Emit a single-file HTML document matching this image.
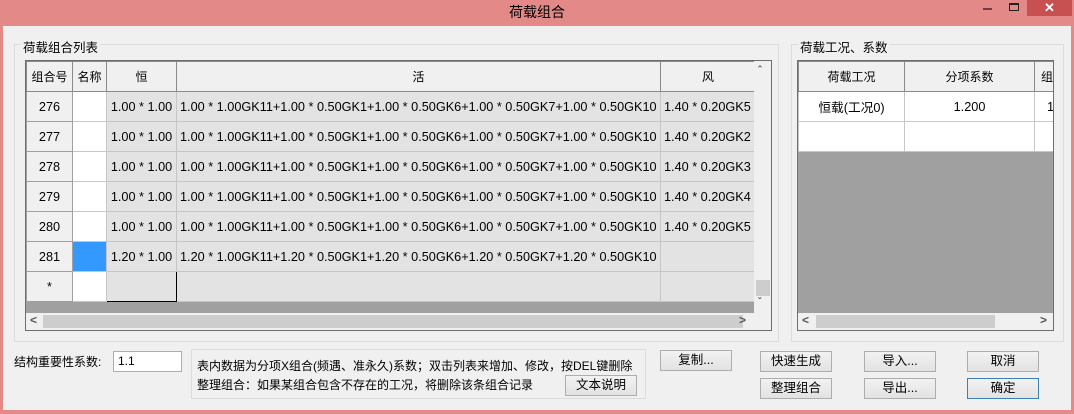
<!DOCTYPE html>
<html><head><meta charset="utf-8"><style>
*{box-sizing:border-box;margin:0;padding:0}
body{width:1074px;height:414px;background:#e38a88;font-family:"Liberation Sans","Noto Sans CJK SC",sans-serif;font-size:12px;color:#000;position:relative;overflow:hidden}
.a{position:absolute}
.title{left:0;top:2px;width:1074px;text-align:center;font-size:14px;color:#000}
.win{left:3px;top:26px;width:1068px;height:384px;background:#f0f0f0}
.grp{border:1px solid #dcdcdc}
.lbl{background:#f0f0f0;padding:0 2px;font-size:12px}
table{border-collapse:collapse;table-layout:fixed}
td{border:1px solid #c6c6c6;height:30px;text-align:center;white-space:nowrap;overflow:hidden;font-size:12.7px;padding:0 3px}
.hd td{background:#f0f0f0;border-color:#8a8a8a;height:30px;font-size:12px}
td.rh{background:#f0f0f0;border-color:#a0a0a0}
td.w{background:#fff}
td.g{background:#e3e3e3}
.btn{border:1px solid #adadad;background:linear-gradient(#f2f2f2,#e2e2e2);text-align:center;line-height:19px;font-size:12.5px;height:21px;width:72px}
.t{font-size:12.5px}
.s{font-size:12px}
</style></head><body>
<div class="a title">荷载组合</div>
<div class="a" style="left:1027px;top:0;width:45px;height:16px;background:#c75050;color:#fff;text-align:center;font-size:13px;line-height:16px;font-weight:bold">✕</div>
<div class="a" style="left:983px;top:8px;width:9px;height:2px;background:#6a4040"></div>
<div class="a" style="left:1009px;top:3px;width:10px;height:8px;border:1px solid #222;border-top-width:2px"></div>
<div class="a win"></div>

<div class="a grp" style="left:14px;top:44px;width:765px;height:298px"></div>
<div class="a lbl t" style="left:21px;top:37px">荷载组合列表</div>
<div class="a" style="left:25px;top:60px;width:747px;height:271px;background:#a0a0a0;border:1px solid #6e6e6e;overflow:hidden">
<table style="width:729px">
<colgroup><col style="width:46px"><col style="width:34px"><col style="width:70px"><col style="width:484px"><col style="width:95px"></colgroup>
<tr class="hd"><td>组合号</td><td>名称</td><td>恒</td><td>活</td><td>风</td></tr>
<tr><td class="rh">276</td><td class="w"></td><td class="g">1.00 * 1.00</td><td class="g" style="text-align:left">1.00 * 1.00GK11+1.00 * 0.50GK1+1.00 * 0.50GK6+1.00 * 0.50GK7+1.00 * 0.50GK10</td><td class="g" style="text-align:left">1.40 * 0.20GK5</td></tr>
<tr><td class="rh">277</td><td class="w"></td><td class="g">1.00 * 1.00</td><td class="g" style="text-align:left">1.00 * 1.00GK11+1.00 * 0.50GK1+1.00 * 0.50GK6+1.00 * 0.50GK7+1.00 * 0.50GK10</td><td class="g" style="text-align:left">1.40 * 0.20GK2</td></tr>
<tr><td class="rh">278</td><td class="w"></td><td class="g">1.00 * 1.00</td><td class="g" style="text-align:left">1.00 * 1.00GK11+1.00 * 0.50GK1+1.00 * 0.50GK6+1.00 * 0.50GK7+1.00 * 0.50GK10</td><td class="g" style="text-align:left">1.40 * 0.20GK3</td></tr>
<tr><td class="rh">279</td><td class="w"></td><td class="g">1.00 * 1.00</td><td class="g" style="text-align:left">1.00 * 1.00GK11+1.00 * 0.50GK1+1.00 * 0.50GK6+1.00 * 0.50GK7+1.00 * 0.50GK10</td><td class="g" style="text-align:left">1.40 * 0.20GK4</td></tr>
<tr><td class="rh">280</td><td class="w"></td><td class="g">1.00 * 1.00</td><td class="g" style="text-align:left">1.00 * 1.00GK11+1.00 * 0.50GK1+1.00 * 0.50GK6+1.00 * 0.50GK7+1.00 * 0.50GK10</td><td class="g" style="text-align:left">1.40 * 0.20GK5</td></tr>
<tr><td class="rh">281</td><td style="background:#3399ff"></td><td class="g">1.20 * 1.00</td><td class="g" style="text-align:left">1.20 * 1.00GK11+1.20 * 0.50GK1+1.20 * 0.50GK6+1.20 * 0.50GK7+1.20 * 0.50GK10</td><td class="g"></td></tr>
<tr><td class="rh">*</td><td class="w"></td><td class="g" style="border:1px solid #000"></td><td class="g"></td><td class="g"></td></tr>
</table>
<div class="a" style="left:728px;top:0;width:17px;height:252px;background:#f0f0f0"></div>
<div class="a" style="left:732px;top:4px;font-size:11px;color:#555;font-weight:bold">ˆ</div>
<div class="a" style="left:730px;top:219px;width:14px;height:16px;background:#cdcdcd"></div>
<div class="a" style="left:732px;top:236px;font-size:10px;color:#555;font-weight:bold">ˇ</div>
<div class="a" style="left:0;top:252px;width:745px;height:17px;background:#f0f0f0"></div>
<div class="a" style="left:17px;top:254px;width:700px;height:13px;background:#cdcdcd"></div>
<div class="a" style="left:4px;top:252px;font-size:12px;color:#555;font-weight:bold">&lt;</div>
<div class="a" style="left:713px;top:252px;font-size:12px;color:#555;font-weight:bold">&gt;</div>
</div>

<div class="a grp" style="left:791px;top:44px;width:273px;height:298px"></div>
<div class="a lbl t" style="left:798px;top:37px">荷载工况、系数</div>
<div class="a" style="left:797px;top:60px;width:257px;height:271px;background:#a0a0a0;border:1px solid #6e6e6e;overflow:hidden">
<table style="width:320px">
<colgroup><col style="width:106px"><col style="width:130px"><col style="width:84px"></colgroup>
<tr class="hd"><td>荷载工况</td><td>分项系数</td><td style="text-align:left;padding-left:6px">组合</td></tr>
<tr><td class="w">恒载(工况0)</td><td class="w">1.200</td><td class="w" style="text-align:left;padding-left:12px">1.</td></tr>
<tr><td class="w"></td><td class="w"></td><td class="w"></td></tr>
</table>
<div class="a" style="left:0;top:252px;width:257px;height:17px;background:#f0f0f0"></div>
<div class="a" style="left:18px;top:254px;width:179px;height:13px;background:#cdcdcd"></div>
<div class="a" style="left:4px;top:252px;color:#555;font-weight:bold">&lt;</div>
<div class="a" style="left:242px;top:252px;color:#555;font-weight:bold">&gt;</div>
</div>

<div class="a s" style="left:14px;top:353px">结构重要性系数:</div>
<div class="a" style="left:113px;top:351px;width:69px;height:21px;background:#fff;border:1px solid #abadb3;padding:2px 4px;font-size:12px">1.1</div>
<div class="a grp" style="left:191px;top:349px;width:455px;height:50px"></div>
<div class="a s" style="left:197px;top:357px">表内数据为分项X组合(频遇、准永久)系数；双击列表来增加、修改，按DEL键删除</div>
<div class="a s" style="left:197px;top:376px">整理组合：如果某组合包含不存在的工况，将删除该条组合记录</div>
<div class="a btn" style="left:565px;top:375px">文本说明</div>
<div class="a btn" style="left:660px;top:350px">复制...</div>
<div class="a btn" style="left:760px;top:351px">快速生成</div>
<div class="a btn" style="left:760px;top:378px">整理组合</div>
<div class="a btn" style="left:864px;top:351px">导入...</div>
<div class="a btn" style="left:864px;top:378px">导出...</div>
<div class="a btn" style="left:967px;top:351px">取消</div>
<div class="a btn" style="left:967px;top:378px;border-color:#3c7fb1">确定</div>
</body></html>
